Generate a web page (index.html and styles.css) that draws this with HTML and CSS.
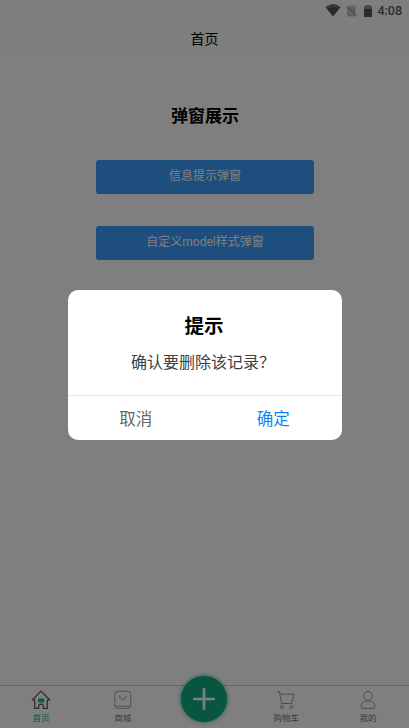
FILE: index.html
```html
<!DOCTYPE html>
<html lang="zh-CN">
<head>
<meta charset="utf-8">
<meta name="viewport" content="width=device-width, initial-scale=1">
<title>首页</title>
<link rel="stylesheet" href="styles.css">
</head>
<body>
<div class="page">
  <header class="status">
    <svg class="wifi" width="16" height="13" viewBox="0 0 16 13"><path d="M0.5 3.2Q8-2.5 15.5 3.2L8 12.5Z" fill="#545454"/><path d="M0.5 3.2Q8-2.5 15.5 3.2L14 5Q8 1.6 2 5Z" fill="#6e6e6e"/></svg>
    <svg class="sim" width="11" height="12" viewBox="0 0 11 12"><path d="M3.8 .5H9.5V11.5H1.2V3.2Z" fill="#c8c8c8"/><path d="M.7 1L10.2 11" stroke="#999" stroke-width="1.2"/><path d="M2 6V10.5H6.5M4 3L8.5 7.5V2" fill="none" stroke="#b0b0b0"/></svg>
    <svg class="battery" width="8" height="12" viewBox="0 0 8 12"><path d="M0 1H8V12H0Z" fill="#545454"/><path d="M0 1H2V0H6V1H8V4H0Z" fill="#909090"/></svg>
    <span class="time">4:08</span>
  </header>
  <div class="navbar">首页</div>
  <main class="content">
    <h1>弹窗展示</h1>
    <button class="primary">信息提示弹窗</button>
    <button class="primary">自定义model样式弹窗</button>
  </main>
  <nav class="tabs">
    <div class="tab active">
      <svg width="20" height="20" viewBox="0 0 20 20"><path d="M1.2 10L10 1.2L18.8 10H16.3V18.4H12.3V15.2Q10 13.2 7.7 15.2V18.4H3.7V10Z" fill="none" stroke="#555" stroke-width="1.2" stroke-linejoin="round"/><rect x="7" y="8.5" width="6.4" height="4" rx="1" fill="#12b886"/></svg>
      <span>首页</span>
    </div>
    <div class="tab">
      <svg width="20" height="20" viewBox="0 0 20 20"><rect x="1.8" y="1.3" width="16" height="17" rx="3" fill="none" stroke="#a0a0a0"/><path d="M6.5 5.5C6.5 10.5 13.2 10.5 13.2 5.5M2 15.2Q2.5 16.2 4 16.2H16Q17.5 16.2 18 15.2" fill="none" stroke="#a0a0a0"/></svg>
      <span>商城</span>
    </div>
    <div class="tab add">
      <div class="plus"><svg width="22" height="22" viewBox="0 0 22 22"><path d="M11 1.3V20.7M1.3 11H20.7" stroke="#fff" stroke-width="2.7" stroke-linecap="round"/></svg></div>
    </div>
    <div class="tab">
      <svg width="20" height="20" viewBox="0 0 20 20"><path d="M1 1.5H3.2L5.8 13.5H15.7L18 4.2H4" fill="none" stroke="#999" stroke-linejoin="round"/><circle cx="6" cy="17" r="1.5" fill="none" stroke="#999"/><circle cx="15.5" cy="17" r="1.5" fill="none" stroke="#999"/></svg>
      <span>购物车</span>
    </div>
    <div class="tab">
      <svg width="20" height="20" viewBox="0 0 20 20"><circle cx="10" cy="5.8" r="4.4" fill="none" stroke="#999"/><path d="M3.2 16.5C3.2 12.8 6 11.2 10 11.2S16.8 12.8 16.8 16.5Q16.8 18.3 15 18.3H5Q3.2 18.3 3.2 16.5Z" fill="none" stroke="#999"/></svg>
      <span>我的</span>
    </div>
  </nav>
</div>
<div class="overlay">
  <section class="modal" role="dialog">
    <h2>提示</h2>
    <p>确认要删除该记录？</p>
    <div class="actions"><button>取消</button><button class="confirm">确定</button></div>
  </section>
</div>
</body>
</html>
```

FILE: styles.css
```css
* { box-sizing: border-box; }
body { margin: 0; font-family: "Noto Sans CJK SC", sans-serif; color: #000; }
button { margin: 0; padding: 0; border: 0; background: none; font-family: inherit; }
.page { height: 728px; display: flex; flex-direction: column; background: #fff; overflow: hidden; }
.status { height: 20px; display: flex; align-items: center; justify-content: flex-end; padding: 1px 7px 0 0; background: #fcfcfc; }
.wifi { margin-right: 5px; }
.sim { margin-right: 7px; }
.battery { margin-right: 5px; }
.time { font: 500 12.5px/16px Roboto, sans-serif; color: #585858; }
.navbar { height: 36px; line-height: 36px; text-align: center; font-size: 14px; background: #fcfcfc; }
.content { flex: 1; display: flex; flex-direction: column; align-items: center; }
h1 { margin: 46px 0 32px; padding-left: 1px; font-size: 17px; line-height: 26px; font-weight: 700; }
.primary { width: 218px; height: 34px; margin-bottom: 32px; padding: 0 0 1px 1px; border-radius: 3px; background: #3a9cfa; color: #fff; font-family: Roboto, "Noto Sans CJK SC", sans-serif; font-size: 12px; line-height: 33px; }
.tabs { height: 43px; display: flex; border-top: 1px solid #d0d0d0; }
.tab { flex: 1; display: flex; flex-direction: column; align-items: center; padding-top: 4px; font-size: 8.5px; line-height: 12px; color: #777; }
.tab span { margin-top: 1px; }
.active { color: #12b886; }
.plus { flex: none; width: 46px; height: 46px; margin-top: -14px; border-radius: 50%; background: #10ad80; display: flex; align-items: center; justify-content: center; box-shadow: 0 0 4px #10ad80; }
.overlay { position: fixed; inset: 0; display: flex; align-items: center; justify-content: center; background: rgba(0, 0, 0, .5); }
.modal { width: 274px; height: 150px; margin-top: 2px; border-radius: 10px; background: #fff; text-align: center; display: flex; flex-direction: column; }
h2 { margin: 21px 0 0; padding-right: 1px; font-size: 19.5px; line-height: 28px; }
p { margin: 9px 0 0; padding-right: 3px; font-size: 16px; line-height: 26px; color: #404040; }
.actions { height: 45px; margin-top: auto; display: flex; border-top: 1px solid #e8e8e8; }
.actions button { flex: 1; font-size: 16.5px; line-height: 44px; color: #666; }
.actions .confirm { padding-left: 1px; color: #0a84f5; }
```
